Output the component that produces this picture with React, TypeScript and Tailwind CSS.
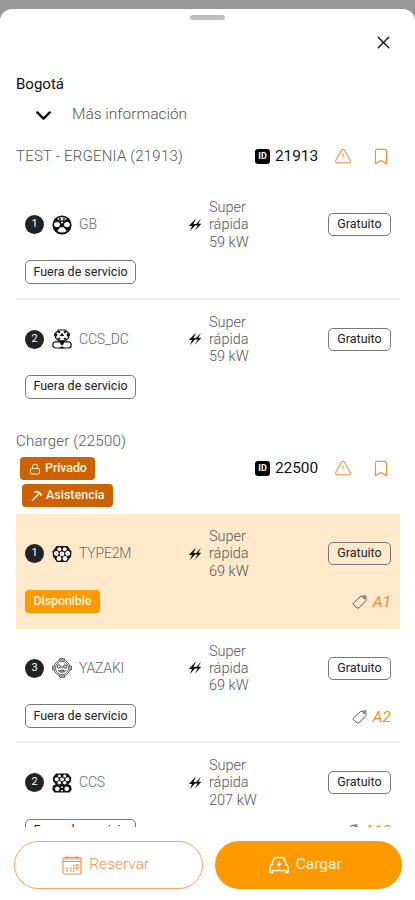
import type { ReactNode } from "react";
import { Bookmark, ChevronDown, Lock, TriangleAlert, X } from "lucide-react";

type Connector = {
  position: number;
  type: string;
  power: string;
  available?: boolean;
  tag?: string;
};

const ergenia: Connector[] = [
  { position: 1, type: "GB", power: "59 kW" },
  { position: 2, type: "CCS_DC", power: "59 kW" },
];

const charger: Connector[] = [
  { position: 1, type: "TYPE2M", power: "69 kW", available: true, tag: "A1" },
  { position: 3, type: "YAZAKI", power: "69 kW", tag: "A2" },
  { position: 2, type: "CCS", power: "207 kW", tag: "A10" },
];

const plugs: Record<string, ReactNode> = {
  GB: (
    <>
      <circle cx="10" cy="10" r="9.6" fill="#111" />
      <g fill="#fff">
        <path d="M5.2 3.4Q10 .9 14.800 3.400L13 5.300H7z" />
        <ellipse cx="5" cy="9.500" rx="2.900" ry="2.600" />
        <ellipse cx="15" cy="9.500" rx="2.900" ry="2.600" />
        <circle cx="10" cy="7.600" r="1" />
        <path d="M8.300 12.300h3.400l3 3.700q-4.700 3-9.400 0z" />
      </g>
      <g fill="#111">
        <circle cx="8" cy="3.900" r="1" />
        <circle cx="12" cy="3.900" r="1" />
      </g>
    </>
  ),
  CCS_DC: (
    <>
      <path
        d="M6.500 1h7l3.700 4-1 4.200-3 2.600H6.800l-3-2.600-1-4.200z"
        fill="#fff"
        stroke="#111"
        strokeWidth="1.200"
      />
      <g fill="#111">
        <circle cx="7" cy="3" r="1.300" />
        <circle cx="13" cy="3" r="1.300" />
        <circle cx="3.700" cy="6" r="1.700" />
        <circle cx="16.300" cy="6" r="1.700" />
        <path d="M10 3.800 12.300 7H7.700zM5.500 8.800h2.700v2H6.500zM14.500 8.800h-2.700v2h1.700z" />
      </g>
      <rect x=".8" y="12.800" width="18.400" height="6.200" rx="3" fill="#fff" stroke="#111" strokeWidth="1.200" />
      <path d="M7.500 11.800h5l-1 3.500L10 16.500l-1.500-1.200zM7 19.300l3-2 3 2z" fill="#111" />
    </>
  ),
  TYPE2M: (
    <>
      <path d="M4.500 2h11l4 5.500-.5 5-4 5.500H5L1 12.500l-.5-5z" fill="#111" />
      <g fill="#fff">
        <circle cx="7.300" cy="5.300" r="2" />
        <circle cx="12.700" cy="5.300" r="2" />
        <circle cx="4.300" cy="9.500" r="2.400" />
        <circle cx="10" cy="9.800" r="2.400" />
        <circle cx="15.700" cy="9.500" r="2.400" />
        <circle cx="7" cy="14.500" r="2.400" />
        <circle cx="13" cy="14.500" r="2.400" />
      </g>
      <g fill="#888">
        <circle cx="4.300" cy="9.500" r=".7" />
        <circle cx="10" cy="9.800" r=".7" />
        <circle cx="15.700" cy="9.500" r=".7" />
      </g>
    </>
  ),
  YAZAKI: (
    <g fill="none" stroke="#333">
      <circle cx="10" cy="10" r="8.100" strokeWidth=".8" />
      <circle cx="10" cy="10" r="6.500" strokeWidth=".8" />
      <path d="M7.500 2V.7h5V2M7.500 18v1.300h5V18M1.800 8H.6v4h1.200M18.200 8h1.200v4h-1.200" strokeWidth=".8" />
      <circle cx="6.800" cy="8.500" r="1.600" />
      <circle cx="13.200" cy="8.500" r="1.600" />
      <path d="M8.600 9h2.800M6 12.300q4 3.700 8 0M8 12.300h4" />
    </g>
  ),
  CCS: (
    <>
      <path
        d="M4 .5h12l3.300 4.300-.5 3.700-2.500 2.800 2.700 1.400.7 4-2.200 2.800h-15L.3 16.700l.7-4 2.700-1.400L1.200 8.500.7 4.800z"
        fill="#111"
      />
      <g fill="#fff">
        <circle cx="7.300" cy="3" r="1.500" />
        <circle cx="12.700" cy="3" r="1.500" />
        <circle cx="4.600" cy="6.300" r="2" />
        <circle cx="10" cy="6.300" r="1.900" />
        <circle cx="15.400" cy="6.300" r="2" />
        <circle cx="7.300" cy="9.700" r="1.800" />
        <circle cx="12.700" cy="9.700" r="1.800" />
        <circle cx="5.300" cy="15.700" r="2.300" />
        <circle cx="14.700" cy="15.700" r="2.300" />
        <path d="M9 13.500h2v1.200H9zM9 17h2v1.200H9z" />
      </g>
    </>
  ),
};

const BoltIcon = () => (
  <svg viewBox="0 0 14 14" className="h-3.5 w-3.5 shrink-0" fill="#111">
    <path d="M7.800.6.800 8h3.200L1.800 13.300l6.600-7.200H5.600zM13 .8 6.800 7.500h2.900L6.600 13 13.400 5.700h-3z" />
  </svg>
);

const TagIcon = () => (
  <svg
    viewBox="0 0 16 16"
    className="h-4 w-4"
    fill="none"
    stroke="#444"
    strokeWidth="0.9"
    strokeLinejoin="round"
  >
    <path d="M1.300 9.200 8.500 2.500 13.900 1.800 14 6.500 7 13.800Q6 14.600 5 13.800L1.300 10.700Q.6 10 1.300 9.200z" />
    <circle cx="12" cy="3.900" r=".7" />
  </svg>
);

const HammerIcon = () => (
  <svg viewBox="0 0 14 14" className="h-3.5 w-3.5" fill="none" stroke="#fff0e0">
    <path d="m2.300 11.500 6-6" strokeWidth="1.500" strokeLinecap="round" />
    <path d="M4.300 3.200q3-1 4.700.4l2.700 2.800" strokeWidth="2" />
  </svg>
);

const CalendarIcon = () => (
  <svg viewBox="0 0 20 20" className="h-5 w-5" fill="none" stroke="#fb8c45" strokeWidth="1.200">
    <rect x="1" y="2.500" width="18" height="16.500" rx="2" />
    <path d="M1 6.500h18M1.500 4h17M5 .8v3M15 .8v3" />
    <path
      d="M8 13.200h1.500M4.500 13.200H6M4.500 16H6M8 16h1.500M11 16h1.500M11 13.200h1.500M11 10.500h1.500"
      strokeWidth="1.500"
    />
    <path d="M14 9.500h2.200v4H14z" strokeWidth=".9" />
  </svg>
);

const CarIcon = () => (
  <svg viewBox="0 0 20 18" className="h-[18px] w-5" fill="none" stroke="#fff" strokeWidth="1.400">
    <path d="M3 8.500 4.200 4Q5 1.500 7.300 1.500h5.400q2.300 0 3.100 2.500L17 8.500q2 .8 2 3v5h-2.500V14.500h-13v2H1v-5q0-2.200 2-3z" />
    <path d="M10.600 4.500 7.400 8.900h2L9 12.200l3.600-4.700h-2z" fill="#fff" stroke="none" />
  </svg>
);

const StationHead = ({ id }: { id: string }) => (
  <div className="flex h-5 items-center">
    <span className="flex h-[15px] w-[15px] items-center justify-center rounded-[3px] bg-black text-[9px] leading-none font-bold text-white">
      ID
    </span>
    <span className="ml-[5px] w-11 text-[15.5px] leading-5 tracking-[-0.1px] text-[#111]">{id}</span>
    <TriangleAlert className="ml-[15px] h-[18px] w-[18px] text-[#fb8c35]" strokeWidth={1.4} />
    <Bookmark className="ml-[19px] h-[19px] w-[20px] text-[#fb8c35]" strokeWidth={1.5} />
  </div>
);

const ConnectorRow = ({ position, type, power, available, tag }: Connector) => (
  <div
    className={`h-[114.5px] border-b-2 px-[9px] ${
      available ? "border-[#ffe9ca] bg-[#ffe9ca]" : "border-[#eeeeee] last:border-transparent"
    }`}
  >
    <div className="flex h-[75px] items-center pt-1">
      <span className="flex h-[19px] w-[19px] shrink-0 items-center justify-center rounded-full bg-[#222] text-[11px] text-white">
        {position}
      </span>
      <svg viewBox="0 0 20 20" className="ml-2 h-5 w-5 shrink-0">
        {plugs[type]}
      </svg>
      <span className="ml-[7px] w-[109px] text-[14px] font-light tracking-[-0.2px] text-[#666]">{type}</span>
      <BoltIcon />
      <div className="ml-[7px] flex-1 pt-px text-[14.5px] leading-[17.3px] font-light text-[#555]">
        Super
        <br />
        rápida
        <br />
        {power}
      </div>
      <span className="flex h-[23px] w-[63px] items-center justify-center rounded-[5px] border border-[#777] text-[12.5px] text-[#222]">
        Gratuito
      </span>
    </div>
    <div className="flex items-center justify-between">
      {available ? (
        <span className="flex h-[23px] w-[75px] items-center justify-center rounded-[4px] bg-[#ff9900] text-[12.5px] font-medium tracking-[-0.1px] text-[#fff3df]">
          Disponible
        </span>
      ) : (
        <span className="flex h-6 w-[111px] items-center justify-center rounded-[5px] border border-[#777] text-[12.5px] text-[#222]">
          Fuera de servicio
        </span>
      )}
      {tag && (
        <span className="flex items-center gap-[5px] pt-px text-[15.5px] leading-6 text-[#ff8a1c] italic">
          <TagIcon />
          {tag}
        </span>
      )}
    </div>
  </div>
);

const App = () => {
  return (
    <div className="h-[900px] w-[415px] overflow-hidden bg-[#999] pt-[9px] font-['Roboto','Liberation_Sans',sans-serif]">
      <div className="flex h-[891px] flex-col rounded-t-[12px] bg-white pt-[6px]">
        <div className="mx-auto h-[5px] w-[35px] shrink-0 rounded-full bg-[#bdbdbd]" />
        <div className="flex shrink-0 justify-end pt-3 pr-[21px]">
          <X className="h-[21px] w-[21px] text-[#111]" strokeWidth={1.6} />
        </div>

        <div className="min-h-0 flex-1 overflow-hidden pt-[21px] pr-[15px] pl-4">
          <h1 className="text-[15px] leading-5 text-[#111]">Bogotá</h1>
          <div className="mt-[11px] flex h-5 items-center">
            <ChevronDown className="ml-[15px] h-[25px] w-[25px] text-black" strokeWidth={2.2} />
            <span className="ml-4 text-[15.5px] font-light text-[#555]">Más información</span>
          </div>

          <div className="mt-[21px] flex h-5 items-center justify-between pr-[9px]">
            <span className="text-[15px] font-light tracking-[0.2px] text-[#555]">TEST - ERGENIA (21913)</span>
            <StationHead id="21913" />
          </div>
          <div className="mt-[19px]">
            {ergenia.map((item) => (
              <ConnectorRow key={item.position} {...item} />
            ))}
          </div>

          <div className="mt-[17px] flex h-[83px] items-start justify-between pr-[9px]">
            <div>
              <p className="text-[15px] leading-5 font-light tracking-[0.2px] text-[#555]">Charger (22500)</p>
              <span className="mt-[6px] ml-1 flex h-[23px] w-[75px] items-center gap-1 rounded-[4px] bg-[#cc6300] pl-[9px] text-[12.5px] font-medium tracking-[-0.1px] text-[#fff0e0]">
                <Lock className="h-3 w-3" strokeWidth={2} />
                Privado
              </span>
              <span className="mt-1 ml-[6px] flex h-[23px] w-[91px] items-center gap-[2px] rounded-[4px] bg-[#cc6300] pl-2 text-[12.5px] font-medium text-[#fff0e0]">
                <HammerIcon />
                Asistencia
              </span>
            </div>
            <div className="pt-[27px]">
              <StationHead id="22500" />
            </div>
          </div>
          <div>
            {charger.map((item) => (
              <ConnectorRow key={item.position} {...item} />
            ))}
          </div>
        </div>

        <div className="flex h-[73px] shrink-0 gap-3 pt-[14px] pr-[13px] pl-[14px]">
          <button className="flex h-[48px] flex-1 items-center justify-center gap-[7px] rounded-full border border-[#ffa060] pr-[5px] text-[15.5px] font-light text-[#fb8c45]">
            <CalendarIcon />
            Reservar
          </button>
          <button className="flex h-[48px] flex-1 items-center justify-center gap-[7px] rounded-full bg-[#ff9900] pr-[6px] text-[15.5px] text-[#fff3df]">
            <CarIcon />
            Cargar
          </button>
        </div>
      </div>
    </div>
  );
};

export default App;
